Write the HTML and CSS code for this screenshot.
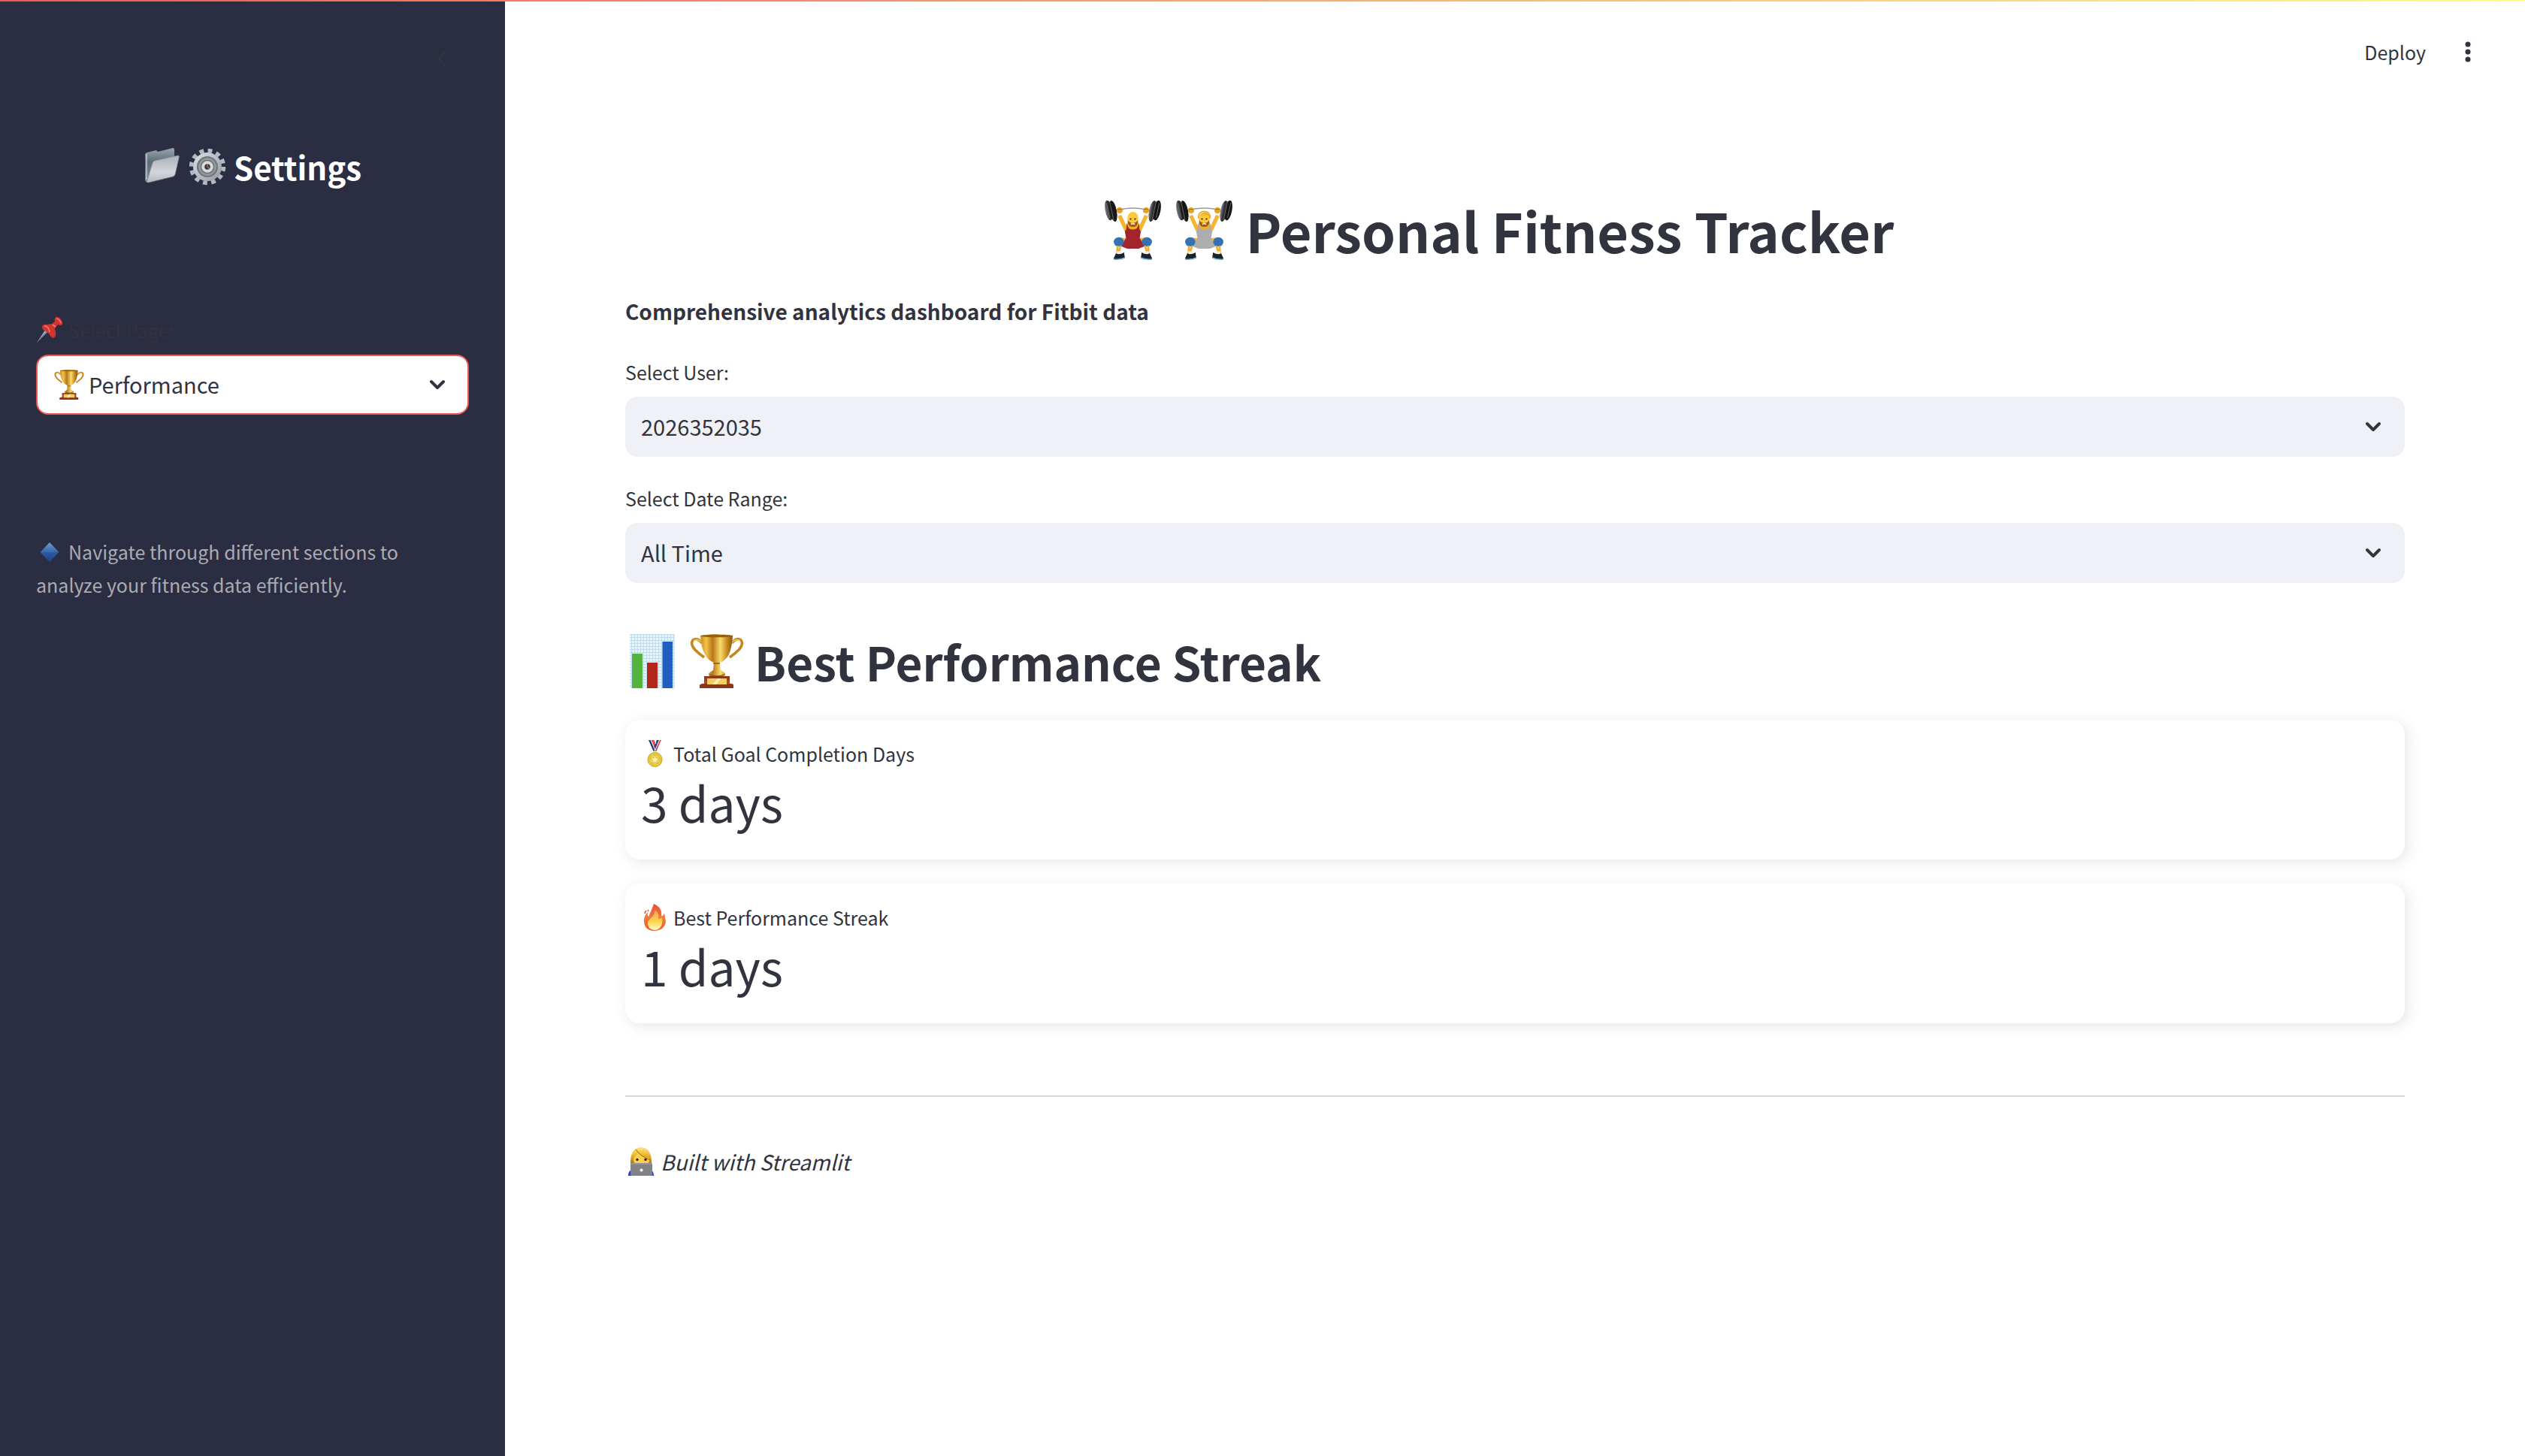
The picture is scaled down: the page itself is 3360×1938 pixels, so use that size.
FILE: index.html
```html
<!DOCTYPE html>
<html lang="en">
<head>
<meta charset="utf-8">
<meta name="viewport" content="width=device-width, initial-scale=1">
<title>Personal Fitness Tracker</title>
<link rel="stylesheet" href="styles.css">
</head>
<body>
<svg class="sprite" aria-hidden="true">
  <defs>
    <linearGradient id="gold" x1="0" x2="1" y1="0" y2="0">
      <stop offset="0" stop-color="#c98a1c"/><stop offset=".18" stop-color="#f2c548"/><stop offset=".38" stop-color="#b9761a"/><stop offset=".62" stop-color="#f8dc6c"/><stop offset=".82" stop-color="#c78a20"/><stop offset="1" stop-color="#8a5410"/>
    </linearGradient>
    <linearGradient id="wood" x1="0" x2="0" y1="0" y2="1">
      <stop offset="0" stop-color="#8a3417"/><stop offset="1" stop-color="#b5532a"/>
    </linearGradient>
    <linearGradient id="folder-back" x1="0" x2="0" y1="0" y2="1">
      <stop offset="0" stop-color="#98a6b1"/><stop offset=".4" stop-color="#5d6d78"/><stop offset="1" stop-color="#7c8893"/>
    </linearGradient>
    <linearGradient id="folder-front" x1="0" x2="0" y1="0" y2="1">
      <stop offset="0" stop-color="#aab0b8"/><stop offset=".6" stop-color="#d3d6da"/><stop offset="1" stop-color="#b4b8be"/>
    </linearGradient>
    <linearGradient id="steel" x1="0" x2="1" y1="0" y2="1">
      <stop offset="0" stop-color="#d5dde4"/><stop offset="1" stop-color="#9a9ea3"/>
    </linearGradient>
    <linearGradient id="flame" x1="0" x2="0" y1="0" y2="1">
      <stop offset="0" stop-color="#e8503c"/><stop offset=".5" stop-color="#f07a3e"/><stop offset="1" stop-color="#ef5a34"/>
    </linearGradient>
    <linearGradient id="flame-core" x1="0" x2="0" y1="0" y2="1">
      <stop offset="0" stop-color="#f3a052"/><stop offset=".6" stop-color="#fbd84c"/><stop offset="1" stop-color="#fffbd0"/>
    </linearGradient>
    <linearGradient id="gem" x1="0" x2="0" y1="0" y2="1">
      <stop offset="0" stop-color="#6f9ccb"/><stop offset=".45" stop-color="#2a5ea8"/><stop offset="1" stop-color="#233f86"/>
    </linearGradient>
    <linearGradient id="hair" x1="0" x2="0" y1="0" y2="1">
      <stop offset="0" stop-color="#fde58a"/><stop offset=".4" stop-color="#f2be35"/><stop offset="1" stop-color="#b06a14"/>
    </linearGradient>
    <linearGradient id="plate" x1="0" x2="1" y1="0" y2="0">
      <stop offset="0" stop-color="#8a8a8c"/><stop offset=".4" stop-color="#3c3c3e"/><stop offset="1" stop-color="#0c0c0d"/>
    </linearGradient>
    <radialGradient id="coin"><stop offset="0" stop-color="#fdf08a"/><stop offset="1" stop-color="#e3c52e"/></radialGradient>
    <pattern id="graph-paper" width="4" height="4" patternUnits="userSpaceOnUse"><rect width="4" height="4" fill="#edf1f4"/><path d="M0 .5h4M.5 0v4" stroke="#c2dcef"/></pattern>
  </defs>

  <symbol id="i-folder" viewBox="0 0 50 50">
    <path d="M2 8l2-2 13-3 2 2 20-5q2 0 2 2v14L6 46q-3 0-4-3z" fill="url(#folder-back)"/>
    <path d="M4 8v34" stroke="#c0c8ce" stroke-width="1.5"/>
    <path d="M12 20q1-3 3-3l31-7q2 0 1 3l-5 22q-1 3-3 3L6 46q-2 0-1-3z" fill="url(#folder-front)" stroke="#8b9299" stroke-width=".7"/>
  </symbol>

  <symbol id="i-gear" viewBox="0 0 50 50">
    <circle cx="25" cy="25" r="21.5" fill="none" stroke="#b3b9be" stroke-width="5.5" stroke-dasharray="5.8 5.457"/>
    <circle cx="25" cy="25" r="16.5" fill="#83898e" stroke="url(#steel)" stroke-width="5"/>
    <circle cx="25" cy="25" r="13" fill="#8b9094" stroke="#666c70" stroke-width="1.2"/>
    <circle cx="25" cy="25" r="10" fill="#6d7377" stroke="#a2a7aa" stroke-width="1"/>
    <circle cx="25" cy="25" r="5.8" fill="#41362f" stroke="#d4dbe1" stroke-width="4"/>
    <path d="M25 21v4l3 3" fill="none" stroke="#978b80" stroke-width="1.2"/>
  </symbol>

  <symbol id="i-pin" viewBox="0 0 36 36">
    <path d="M1 35l12-18 3 3z" fill="#a5b4c2"/>
    <path d="M1 35l14-16" stroke="#55616d" stroke-width=".8"/>
    <path d="M8 14q1-4 6-3l7-1 4-3q-1-4 1-6 4-1 7 3t2 7q-3 2-6 0l-4 5 1 6q1 5-3 7-4-1-6-6l-4-3q-5-2-5-6z" fill="#d2342f"/>
    <path d="M11 13q6 0 7 8M27 3q4 0 6 6M22 11l4 3" fill="none" stroke="#f27a70" stroke-width="1.6"/>
  </symbol>

  <symbol id="i-trophy" viewBox="0 0 70 72">
    <path d="M15 12Q9 4 3 8q-4 5 3 13 5 5 12 10M55 12q6-8 12-4 4 5-3 13-5 5-12 10" fill="none" stroke="#c4871d" stroke-width="3.6"/>
    <path d="M15 11Q9 5 4 9M55 11q6-6 11-2" fill="none" stroke="#f3d06a" stroke-width="1.4"/>
    <path d="M13 2q22-4 43 0-1 16-5 25-5 9-12 11l1 10 6 4q1 4-3 5H27q-4-1-3-5l6-4 1-10q-8-3-12-11-5-9-6-25z" fill="url(#gold)"/>
    <ellipse cx="34.500" cy="2.500" rx="21" ry="1.700" fill="#93600f"/>
    <path d="M30 39h9M25 54q10 4 20 0" stroke="#8d5a12" stroke-width="1.4" fill="none"/>
    <path d="M18 56h34v11H18z" fill="url(#wood)"/>
    <path d="M12 68q1-2 4-2h38q3 0 3 2v4H12z" fill="#8d3618"/>
    <path d="M22 59h26v8H22z" fill="#f3cf62"/><path d="M29 67l7-8h5l-7 8z" fill="#fdeeb0"/>
  </symbol>

  <symbol id="i-gem" viewBox="0 0 36 36">
    <path d="M18 5l12.500 13L18 31 5.500 18z" fill="url(#gem)"/><path d="M18 5l12.500 13H5.500z" fill="#79a5d2" opacity=".2"/>
  </symbol>

  <symbol id="i-lifter" viewBox="0 0 74 80" preserveAspectRatio="none">
    <path d="M14 15q23-8 46 0" fill="none" stroke="#9a9a9c" stroke-width="1.5"/>
    <path d="M19 18l10 23M55 18l-10 23" stroke="#f3b634" stroke-width="5"/>
    <path d="M17.500 20l5-2M56.500 20l-5-2" stroke="#f7f7f7" stroke-width="4"/>
    <path d="M31 29h12l4 8-6 8H33l-6-8z" fill="#f0ae2c"/>
    <path d="M29 31q1 8-2 11l2 12-2 9q9 4 20 0l-2-9 2-12q-3-3-2-11l-3 7q-5 3-10 0z" fill="currentColor"/>
    <path d="M28 51l-9 1-1 8 12 5h14l12-5-1-8-9-1z" fill="currentColor"/>
    <path d="M19.500 50l9 1-5 8zM54.500 50l-9 1 5 8z" fill="#f3b634"/>
    <circle cx="19.500" cy="56" r="6.300" fill="#3672b3"/><circle cx="54.500" cy="56" r="6.300" fill="#3672b3"/>
    <path d="M18 61l-.5 10M22 61l-3 10M52 61l3 10M56 61l.5 10" stroke="#f0ae2c" stroke-width="2.600"/>
    <path d="M17 70h6M51 70h6" stroke="#eef0f2" stroke-width="3"/>
    <path d="M16 71q4 3 10-1l1 7-8 2q-6 1-6-1zM58 71q-4 3-10-1l-1 7 8 2q6 1 6-1z" fill="#202124"/>
    <path d="M13 79q8 1 14-2M61 79q-8 1-14-2" fill="none" stroke="#62aee8" stroke-width="1.500"/>
    <ellipse cx="37" cy="24.500" rx="6.800" ry="8.500" fill="#fbc83d"/><path d="M30.500 27q0 9 6.500 9t6.500-9q-3 4-6.500 4t-6.500-4z" fill="#9b5a17"/>
    <path d="M34.500 32.500q2.500-1.500 5 0" stroke="#fff3d8" stroke-width="1.500" fill="none"/>
    <circle cx="34.200" cy="25.500" r="1.100" fill="#3a2412"/><circle cx="39.800" cy="25.500" r="1.100" fill="#3a2412"/>
    <circle cx="20.500" cy="14" r="4" fill="#e7a31d"/><circle cx="53.500" cy="14" r="4" fill="#e7a31d"/>
    <path d="M18 12.500h5M51 12.500h5" stroke="#a56c0c"/>
    <g><ellipse cx="7" cy="14" rx="4.500" ry="13.500" transform="rotate(-10 7 14)" fill="url(#plate)"/><ellipse cx="12.500" cy="15" rx="4.300" ry="14.300" transform="rotate(-10 12.500 15)" fill="#171718"/><path d="M8 2l5 25M4 4l4 20" stroke="#777" stroke-width=".8"/></g>
    <g><ellipse cx="67" cy="14" rx="4.500" ry="13.500" transform="rotate(10 67 14)" fill="#151516"/><ellipse cx="61.500" cy="15" rx="4.300" ry="14.300" transform="rotate(10 61.500 15)" fill="url(#plate)"/><path d="M66 2l-5 25M70 4l-4 20" stroke="#777" stroke-width=".8"/></g>
  </symbol>
  <symbol id="i-lifter-hair" viewBox="0 0 74 80" preserveAspectRatio="none">
    <path d="M29.500 25q-1-10 7.500-10 8.500 0 7.500 10l-2-5-6-2q-4 3-6 3z" fill="#f5bc35" stroke="#d5941f" stroke-width=".7"/>
    <path d="M31 23q0-5 5-6" stroke="#ffe492" fill="none"/>
  </symbol>

  <symbol id="i-chart" viewBox="0 0 72 72">
    <path d="M6 0h60v72H6z" fill="url(#graph-paper)"/>
    <path d="M9 26h14v46H9z" fill="#52b43c"/><path d="M29 38h14v34H29z" fill="#b3261c"/><path d="M49.500 10h13.500v62H49.500z" fill="#215fbf"/>
  </symbol>

  <symbol id="i-medal" viewBox="0 0 36 36">
    <path d="M10 0l6.500 15 4 0L13.500 0z" fill="#1f3488"/><path d="M27 0l-6.500 15h-4L23 0z" fill="#e1504a"/>
    <path d="M13.500 0l5 11 2-4L17.500 0z" fill="#e1504a"/><path d="M21 0l-3.500 9 2.500 5L24 0z" fill="#26398f"/>
    <path d="M13 0l6 14M18 0l2 5M24.500 0l-6 14" stroke="#fff" stroke-width="1"/>
    <circle cx="18.500" cy="26" r="9.500" fill="url(#coin)" stroke="#c6a22a"/><circle cx="18.500" cy="26" r="6.800" fill="none" stroke="#d8b72e" stroke-width=".8"/>
    <path d="M18.500 20l1.800 4 4.200.4-3.200 2.800 1 4.300-3.800-2.300-3.800 2.300 1-4.300-3.200-2.800 4.200-.4z" fill="#fbf0a0" stroke="#c9a72c" stroke-width=".7"/>
  </symbol>

  <symbol id="i-fire" viewBox="0 0 36 36">
    <path d="M17 0q9 4 10 11 0 5 1 6l3-4q1 3 1 6l1 4q-1 12-15 13Q5 36 4 24q-1-7 5-13-1 5 1 6Q15 6 17 0z" fill="url(#flame)"/>
    <path d="M18 8q7 5 5 12 3 0 5-2 2 16-10 17Q8 34 9 24l4-5q6-4 5-11z" fill="url(#flame-core)"/>
    <path d="M7 9q-2 2-2 4M10 8l-1 2" stroke="#e8503c" stroke-width="1.500"/>
  </symbol>

  <symbol id="i-coder" viewBox="0 0 38 38">
    <path d="M2 38q0-7 5-8h24q5 1 5 8z" fill="#2b3fc4"/>
    <path d="M5 23Q4 1 19 0q15 1 14 23H5z" fill="url(#hair)"/>
    <path d="M9 15q4-5 6-8 5 6 15 8 1 6-4 7H12q-3-1-3-7z" fill="#fcd04a"/>
    <path d="M12 3q6 9 19 14" fill="none" stroke="#9a5f10" stroke-width="1"/>
    <circle cx="14" cy="16.500" r="1.700" fill="#35230f"/><circle cx="25" cy="16.500" r="1.700" fill="#35230f"/>
    <rect x="5" y="21" width="29" height="17" rx="1.500" fill="#808285"/><path d="M5 22h29" stroke="#a6a8aa"/>
    <circle cx="19.500" cy="30.500" r="2" fill="#fff"/>
  </symbol>

  <symbol id="i-chevron" viewBox="0 0 24 16">
    <path d="M4 4l8 8 8-8" fill="none" stroke="currentColor" stroke-width="4" stroke-linecap="round" stroke-linejoin="round"/>
  </symbol>
</svg>

<div class="app">
  <aside class="sidebar">
    <div class="sidebar-top">
      <button class="icon-button" type="button" aria-label="Collapse sidebar">
        <svg class="collapse-icon" viewBox="0 0 16 24"><path d="M13 1L4 12l9 11" fill="none" stroke="currentColor" stroke-width="3"/></svg>
      </button>
    </div>
    <h2 class="sidebar-title">
      <svg class="emoji-lg" aria-hidden="true"><use href="#i-folder"/></svg>
      <svg class="emoji-lg" aria-hidden="true"><use href="#i-gear"/></svg>
      Settings
    </h2>
    <hr class="sidebar-rule">
    <div class="field">
      <label class="label" for="page"><svg class="emoji-sm" aria-hidden="true"><use href="#i-pin"/></svg>Select Page:</label>
      <div class="select-wrap">
        <svg class="select-emoji" aria-hidden="true"><use href="#i-trophy"/></svg>
        <select class="select select-page" id="page"><option>Performance</option></select>
        <svg class="chevron" aria-hidden="true"><use href="#i-chevron"/></svg>
      </div>
    </div>
    <hr class="sidebar-rule">
    <p class="note"><svg class="emoji-sm note-emoji" aria-hidden="true"><use href="#i-gem"/></svg>Navigate through different sections to analyze your fitness data efficiently.</p>
  </aside>

  <div class="page">
    <header class="toolbar">
      <button class="toolbar-button" type="button">Deploy</button>
      <button class="icon-button" type="button" aria-label="Main menu">
        <svg class="menu-icon" viewBox="0 0 32 32"><g fill="currentColor"><circle cx="16" cy="6" r="3.500"/><circle cx="16" cy="16" r="3.500"/><circle cx="16" cy="26" r="3.500"/></g></svg>
      </button>
    </header>
    <main class="content">
      <h1 class="title">
        <svg class="emoji-title lifter-red" aria-hidden="true"><use href="#i-lifter"/></svg>
        <svg class="emoji-title lifter-gray" aria-hidden="true"><use href="#i-lifter"/><use href="#i-lifter-hair"/></svg>
        Personal Fitness Tracker
      </h1>
      <p class="lead">Comprehensive analytics dashboard for Fitbit data</p>
      <div class="field">
        <label class="label" for="user">Select User:</label>
        <div class="select-wrap">
          <select class="select" id="user"><option>2026352035</option></select>
          <svg class="chevron" aria-hidden="true"><use href="#i-chevron"/></svg>
        </div>
      </div>
      <div class="field">
        <label class="label" for="range">Select Date Range:</label>
        <div class="select-wrap">
          <select class="select" id="range"><option>All Time</option></select>
          <svg class="chevron" aria-hidden="true"><use href="#i-chevron"/></svg>
        </div>
      </div>
      <section class="metrics">
        <h2 class="section-title">
          <svg class="emoji-xl" aria-hidden="true"><use href="#i-chart"/></svg>
          <svg class="emoji-xl" aria-hidden="true"><use href="#i-trophy"/></svg>
          Best Performance Streak
        </h2>
        <article class="card">
          <h3 class="card-label"><svg class="emoji-sm" aria-hidden="true"><use href="#i-medal"/></svg>Total Goal Completion Days</h3>
          <p class="card-value">3 days</p>
        </article>
        <article class="card">
          <h3 class="card-label"><svg class="emoji-sm" aria-hidden="true"><use href="#i-fire"/></svg>Best Performance Streak</h3>
          <p class="card-value">1 days</p>
        </article>
      </section>
      <hr class="rule">
      <footer class="credit"><svg class="emoji-md" aria-hidden="true"><use href="#i-coder"/></svg><em>Built with Streamlit</em></footer>
    </main>
  </div>
</div>
</body>
</html>
```

FILE: styles.css
```css
* {
  box-sizing: border-box;
  margin: 0;
}

body {
  position: relative;
  background: #fff;
  color: #31333f;
  font: 400 29px/48px "Noto Sans CJK SC", "Noto Sans", sans-serif;
}

/* Thin status stripe laid over the top edge of the whole app */
body::before {
  content: "";
  position: absolute;
  inset: 0 0 auto;
  height: 2px;
  background: linear-gradient(90deg, #ee5a56, #fffb8c);
}

button {
  border: 0;
  padding: 0;
  background: none;
  color: inherit;
  font: inherit;
}

svg {
  display: block;
  flex: none;
}

.sprite {
  position: absolute;
  width: 0;
  height: 0;
}

.app {
  display: flex;
  min-height: 100vh;
}

/* Sidebar */
.sidebar {
  flex: 0 0 20%;
  padding: 56px 48px 48px;
  background: #2b2d42;
}

.sidebar-top {
  display: flex;
  justify-content: flex-end;
  padding-right: 28px;
}

.icon-button {
  display: grid;
  place-items: center;
}

.collapse-icon {
  width: 16px;
  height: 44px;
}

.sidebar .icon-button {
  color: #31333f;
}

.sidebar-title {
  display: flex;
  justify-content: center;
  align-items: center;
  gap: 10px;
  margin-top: 92px;
  color: #fff;
  font-size: 42px;
  line-height: 60px;
}

.sidebar-rule {
  height: 2px;
  margin: 46px 0 118px;
  border: 0;
  background: #2a2c40;
}

.field + .sidebar-rule {
  margin: 86px 0 72px;
}

.sidebar .label {
  color: #31333f;
}

.note {
  padding-right: 12px;
  color: #aaabb3;
  font-size: 25px;
  line-height: 44px;
}

.note-emoji {
  display: inline-block;
  margin-right: 7px;
  vertical-align: -8px;
}

/* Emoji sizes */
.emoji-sm {
  width: 36px;
  height: 36px;
}

.emoji-md {
  width: 38px;
  height: 38px;
}

.emoji-lg {
  width: 50px;
  height: 50px;
}

.emoji-xl {
  width: 72px;
  height: 72px;
}

.emoji-title {
  width: 79px;
  height: 80px;
}

.lifter-red {
  color: #a3242b;
}

.lifter-gray {
  color: #adadaf;
}

/* Form fields */
.field {
  display: flex;
  flex-direction: column;
  gap: 12px;
}

.label {
  display: flex;
  align-items: center;
  gap: 7px;
  font-size: 25px;
  line-height: 42px;
}

.select-wrap {
  position: relative;
}

.select {
  appearance: none;
  display: block;
  width: 100%;
  height: 80px;
  padding: 0 80px 2px 21px;
  border: 0;
  border-radius: 16px;
  background: #f0f1f6;
  color: inherit;
  font: inherit;
}

.select-page {
  padding-left: 68px;
  border: 2px solid #ee5552;
  background: #fff;
}

.sidebar .select-wrap {
  color: #31333f;
}

.select-emoji {
  position: absolute;
  top: 20px;
  left: 24px;
  width: 40px;
  height: 40px;
  pointer-events: none;
}

.chevron {
  position: absolute;
  top: 32px;
  right: 30px;
  width: 24px;
  height: 16px;
  pointer-events: none;
}

/* Main area */
.page {
  flex: 1;
  min-width: 0;
}

.toolbar {
  display: flex;
  justify-content: flex-end;
  align-items: center;
  gap: 40px;
  padding: 50px 60px 0;
}

.toolbar-button {
  font-size: 25px;
  line-height: 38px;
}

.menu-icon {
  width: 32px;
  height: 32px;
}

.content {
  display: flex;
  flex-direction: column;
  gap: 34px;
  padding: 170px 160px 80px;
}

.title {
  display: flex;
  justify-content: center;
  align-items: center;
  gap: 16px;
  padding-right: 44px;
  font-size: 72px;
  line-height: 96px;
}

.lead {
  font-size: 28px;
  font-weight: 600;
  line-height: 52px;
}

.metrics {
  display: flex;
  flex-direction: column;
  gap: 32px;
  margin-top: 24px;
}

.section-title {
  display: flex;
  align-items: center;
  gap: 14px;
  font-size: 62px;
  font-weight: 600;
  line-height: 92px;
}

.card {
  padding: 23px 21px 35px;
  border-radius: 20px;
  background: #fff;
  box-shadow: 4px 4px 20px rgba(0, 0, 0, .1);
}

.card-label {
  display: flex;
  align-items: center;
  gap: 7px;
  font-size: 25px;
  font-weight: 400;
  line-height: 44px;
}

.card-value {
  font-size: 64px;
  line-height: 84px;
}

.rule {
  height: 2px;
  margin: 62px 0 28px;
  border: 0;
  background: #d6d6d9;
}

.credit {
  display: flex;
  align-items: center;
  gap: 7px;
  padding-left: 2px;
  font-size: 28px;
}
```
